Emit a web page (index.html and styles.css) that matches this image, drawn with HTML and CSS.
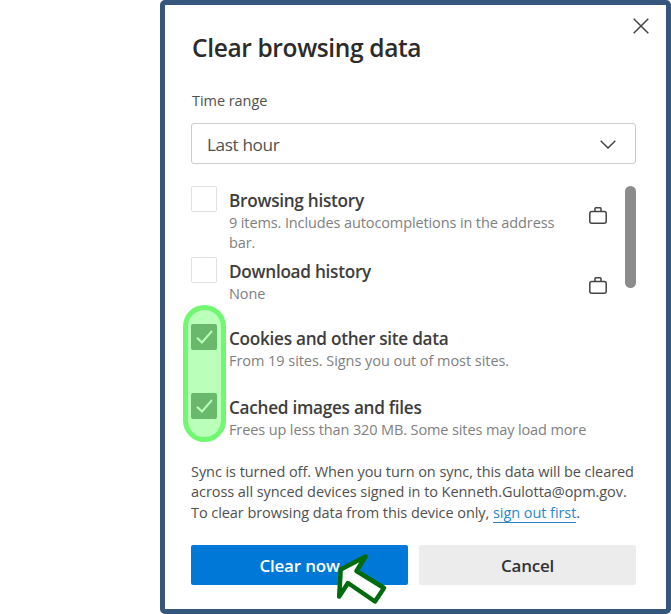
FILE: index.html
```
<!DOCTYPE html>
<html lang="en">
<head>
<meta charset="utf-8">
<title>Clear browsing data</title>
<link rel="stylesheet" href="styles.css">
</head>
<body>
<main class="dialog">
  <button class="close" aria-label="Close"><svg width="16" height="16" viewBox="0 0 16 16"><path d="M.7.7l14.6 14.6M15.3.7L.7 15.3"/></svg></button>
  <h1>Clear browsing data</h1>
  <div class="label">Time range</div>
  <div class="select"><span>Last hour</span><svg width="16" height="9" viewBox="0 0 16 9"><path d="M.7.8L8 8L15.3.8"/></svg></div>
  <section class="options">
    <div class="list">
      <div class="row first">
        <span class="box"></span>
        <div class="text"><h2>Browsing history</h2><p>9 items. Includes autocompletions in the address<br>bar.</p></div>
        <svg class="case" width="18" height="17" viewBox="0 0 18 17"><rect x=".8" y="4.6" width="16.4" height="11.6" rx="2"/><path d="M6 4.6V1.6Q6 .8 6.8.8h4.4q.8 0 .8.8v3"/></svg>
      </div>
      <div class="row second">
        <span class="box"></span>
        <div class="text"><h2>Download history</h2><p>None</p></div>
        <svg class="case" width="18" height="17" viewBox="0 0 18 17"><rect x=".8" y="4.6" width="16.4" height="11.6" rx="2"/><path d="M6 4.6V1.6Q6 .8 6.8.8h4.4q.8 0 .8.8v3"/></svg>
      </div>
      <div class="row third">
        <span class="box checked"><svg width="17" height="14" viewBox="0 0 17 14"><path d="M1 7.7l5 4.8L16 1"/></svg></span>
        <div class="text"><h2>Cookies and other site data</h2><p class="wide">From 19 sites. Signs you out of most sites.</p></div>
      </div>
      <div class="row fourth">
        <span class="box checked"><svg width="17" height="14" viewBox="0 0 17 14"><path d="M1 7.7l5 4.8L16 1"/></svg></span>
        <div class="text"><h2>Cached images and files</h2><p>Frees up less than 320 MB. Some sites may load more</p></div>
      </div>
      <div class="highlight"></div>
    </div>
    <div class="thumb"></div>
  </section>
  <p class="sync">Sync is turned off. When you turn on sync, this data will be cleared<br>across all synced devices signed in to Kenneth.Gulotta@opm.gov.<br>To clear browsing data from this device only, <a>sign out first</a>.</p>
  <footer class="actions">
    <button class="primary">Clear now</button>
    <button class="secondary">Cancel</button>
    <svg class="pointer" width="54" height="54" viewBox="334 552 54 54"><path d="M339.2 596.5L340.7 569.500L365.500 556.500L356.500 571L384 588L375 601.500L348 583Z"/></svg>
  </footer>
</main>
</body>
</html>
```
FILE: styles.css
```
* { box-sizing: border-box; }
body { margin: 0; background: #fff; font-family: "Open Sans", "Noto Sans", sans-serif; overflow: hidden; }
h1, h2, p { margin: 0; }
button { border: 0; padding: 0; background: none; font: inherit; }
svg { fill: none; stroke: #444; stroke-width: 1.5; display: block; }
.dialog { position: relative; margin-left: 160px; width: 511px; height: 614px; border: 5.5px solid #36577d; border-radius: 5px; padding: 0 31px 0 26px; }
.close { position: absolute; right: 17px; top: 13px; }
h1 { height: 75px; padding: 26px 0 0 1px; font-size: 24.5px; line-height: 34px; font-weight: 570; letter-spacing: -.36px; color: #2b2b2b; white-space: nowrap; }
.label { height: 43px; padding: 11px 0 0 1px; font-size: 14.5px; line-height: 20px; letter-spacing: -.05px; color: #505050; }
.select { height: 41px; width: 445px; border: 1.5px solid #ccc; border-radius: 3px; display: flex; align-items: center; justify-content: space-between; padding: 1px 19px 0 15px; font-size: 17.2px; letter-spacing: -.38px; color: #505050; }
.options { display: flex; width: 445px; height: 275px; margin-top: 22px; justify-content: space-between; }
.list { position: relative; width: 416px; }
.row { display: flex; }
.first { height: 71px; }
.second { height: 67px; }
.third { height: 69px; }
.box { width: 26px; height: 26px; flex: none; border: 1.5px solid #e1e1e1; border-radius: 2px; }
.checked { display: flex; align-items: center; justify-content: center; border: 0; background: #536957; }
.checked svg { stroke: #fff; stroke-width: 2; }
.text { margin-left: 12px; flex: 1; white-space: nowrap; }
h2 { font-size: 17.2px; line-height: 25px; height: 26px; padding-top: 2px; font-weight: 570; letter-spacing: -.28px; color: #3d3d3d; }
.text p { font-size: 14.5px; line-height: 20px; padding-top: 1px; letter-spacing: -.115px; color: #808080; }
.text .wide { letter-spacing: -.05px; }
.case { flex: none; margin-top: 21px; }
.second .case { margin-top: 20px; }
.thumb { width: 11px; height: 102px; border-radius: 6px; background: #8c8c8c; }
.highlight { position: absolute; left: -8px; top: 119px; width: 43px; height: 137px; border: 5px solid #70f870; border-radius: 22px; background: rgba(125, 255, 125, .53); }
.sync { height: 84px; padding-top: 1px; font-size: 14.5px; line-height: 20.3px; letter-spacing: -.06px; color: #505050; white-space: nowrap; }
.sync a { color: #2b87c8; border-bottom: 1.5px solid #2b87c8; display: inline-block; line-height: 19px; }
.actions { position: relative; display: flex; gap: 11px; width: 445px; }
.actions button { flex: 1; height: 40px; border-radius: 2px; font-size: 17px; font-weight: 570; letter-spacing: -.2px; color: #333; }
.actions .primary { background: #0078d7; color: #fff; font-weight: 600; }
.actions .secondary { background: #ececec; }
.pointer { position: absolute; left: 143px; top: 7px; fill: #fff; stroke: #006b0b; stroke-width: 4.5; stroke-linejoin: round; }
```
